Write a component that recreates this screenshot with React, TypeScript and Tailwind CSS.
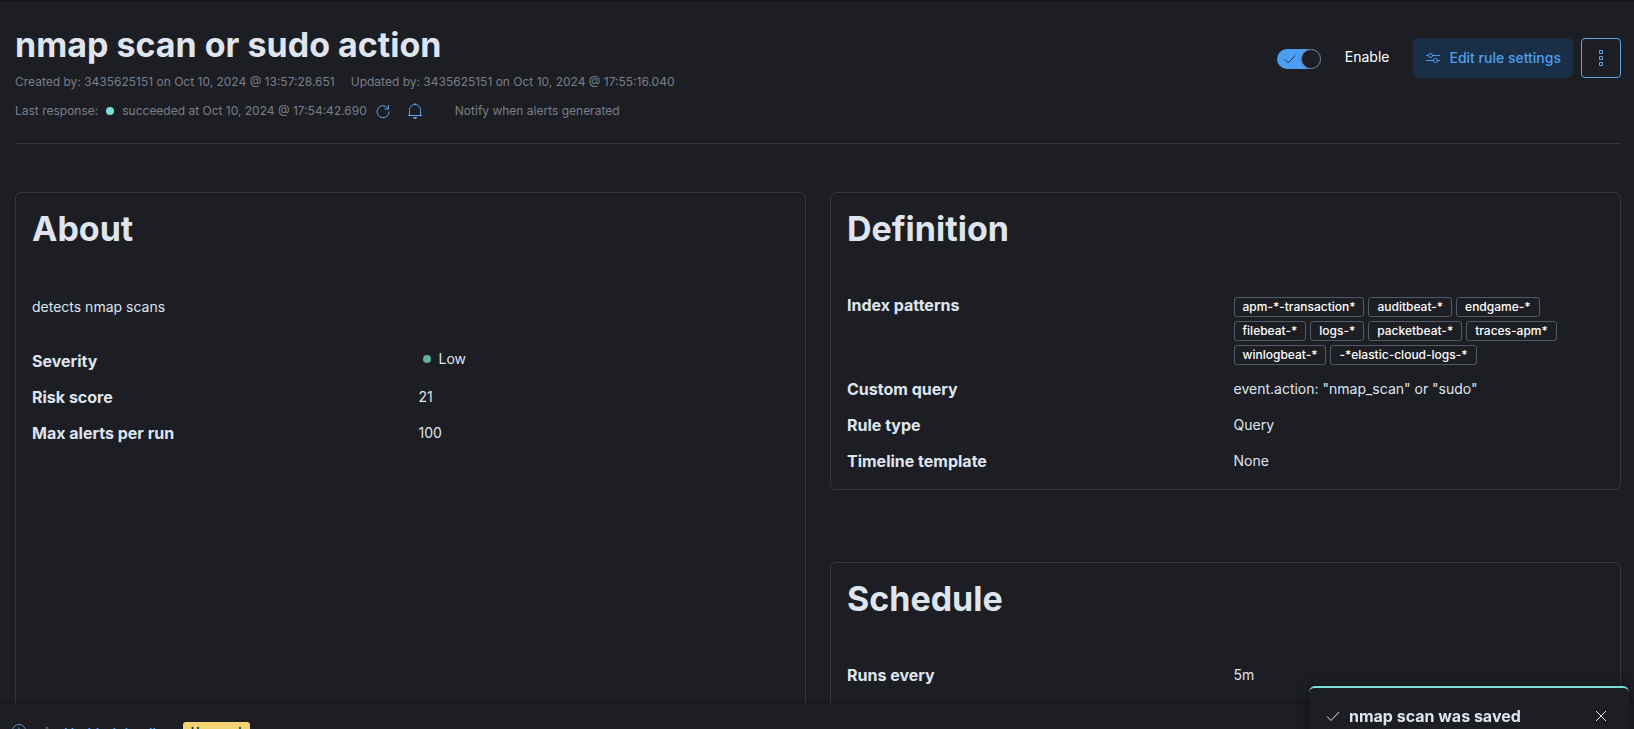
import type { ReactNode } from "react";

const tags = [
  "apm-*-transaction*",
  "auditbeat-*",
  "endgame-*",
  "filebeat-*",
  "logs-*",
  "packetbeat-*",
  "traces-apm*",
  "winlogbeat-*",
  "-*elastic-cloud-logs-*",
];

function Panel({ title, className, children }: { title: string; className?: string; children: ReactNode }) {
  return (
    <section className={`rounded-md border border-[#343741] p-4 ${className ?? ""}`}>
      <h2 className="text-[34px] leading-10 font-bold text-[#dfe5ef]">{title}</h2>
      <div className="pt-11">{children}</div>
    </section>
  );
}

function Row({ label, children }: { label: string; children: ReactNode }) {
  return (
    <div className="grid grid-cols-2 items-start gap-4">
      <dt className="text-base leading-6 font-bold text-[#dfe5ef]">{label}</dt>
      <dd className="text-sm leading-6">{children}</dd>
    </div>
  );
}

function CheckIcon({ className }: { className: string }) {
  return (
    <svg viewBox="0 0 16 16" className={className} fill="none" stroke="currentColor" aria-hidden="true">
      <path d="M2 8.5 6 12.5 14 4" />
    </svg>
  );
}

export default function App() {
  return (
    <div className="relative flex h-screen flex-col overflow-hidden border-t border-[#131418] bg-[#1d1e24] font-['Inter',sans-serif] text-[#dfe5ef]">
      <main className="min-h-0 flex-1 overflow-hidden pt-6 pr-[13px] pl-[15px]">
        <header className="flex items-start justify-between border-b border-[#343741] pb-[22px]">
          <div className="text-xs leading-5 text-[#7a7e89]">
            <h1 className="text-[34px] leading-10 font-bold text-[#dfe5ef]">nmap scan or sudo action</h1>
            <div className="mt-[7px] flex gap-4">
              <span>Created by: 3435625151 on Oct 10, 2024 @ 13:57:28.651</span>
              <span>Updated by: 3435625151 on Oct 10, 2024 @ 17:55:16.040</span>
            </div>
            <div className="mt-[9px] flex items-center">
              <span>Last response:</span>
              <span className="mx-2 size-2 rounded-full bg-[#7dded8]" />
              <span>succeeded at Oct 10, 2024 @ 17:54:42.690</span>
              <button aria-label="Refresh" className="ml-2 text-[#61a2e8]">
                <svg viewBox="0 0 16 16" className="size-4" fill="none" stroke="currentColor" aria-hidden="true">
                  <path d="M13.5 2v4h-4M13.1 5.6A6 6 0 1 0 14 8.5" />
                </svg>
              </button>
              <button aria-label="Notifications" className="ml-4 text-[#61a2e8]">
                <svg viewBox="0 0 16 16" className="size-4" fill="none" stroke="currentColor" aria-hidden="true">
                  <path d="M.8 12.5h14.4M2.5 12.5V7.5C2.5 4 4.8 1.5 8 1.5s5.500 2.500 5.500 6v5M8 0v1.500" />
                  <path d="M6 14h4a2 2 0 0 1-4 0Z" fill="currentColor" stroke="none" />
                </svg>
              </button>
              <span className="ml-8">Notify when alerts generated</span>
            </div>
          </div>
          <div className="flex items-center pt-[13px]">
            <label className="flex items-start gap-6 text-sm">
              <input type="checkbox" role="switch" defaultChecked className="peer sr-only" />
              <span className="mt-0.5 flex h-5 w-11 items-center justify-between rounded-full bg-[#4c9ff0] pl-1.5">
                <CheckIcon className="size-3.5 text-[#1d1e24]" />
                <span className="size-5 rounded-full border border-[#69707d] bg-[#1d1e24]" />
              </span>
              <span className="leading-5 text-white">Enable</span>
            </label>
            <button className="ml-6 flex h-10 items-center gap-2 rounded-md bg-[#1a2f45] px-3 text-sm font-medium text-[#4c9ff0]">
              <svg viewBox="0 0 16 16" className="size-4" fill="none" stroke="currentColor" aria-hidden="true">
                <path d="M1 5.500h2.500M7.500 5.500H15M1 10.500h7.500M12.500 10.500H15" />
                <circle cx="5.500" cy="5.500" r="2" />
                <circle cx="10.500" cy="10.500" r="2" />
              </svg>
              Edit rule settings
            </button>
            <button aria-label="All actions" className="ml-2 flex size-10 items-center justify-center rounded border border-[#61a2e8] text-[#61a2e8]">
              <svg viewBox="0 0 16 16" className="size-4" fill="none" stroke="currentColor" aria-hidden="true">
                <path d="M6.500.5h3v3h-3zM6.500 6.500h3v3h-3zM6.500 12.500h3v3h-3z" />
              </svg>
            </button>
          </div>
        </header>

        <div className="mt-12 grid grid-cols-2 gap-6">
          <Panel title="About" className="min-h-[600px]">
            <p className="pt-1 text-sm leading-5">detects nmap scans</p>
            <dl className="mt-8 flex flex-col gap-3">
              <Row label="Severity">
                <span className="ml-1 flex items-center gap-2 leading-5">
                  <span className="size-2 rounded-full bg-[#60b398]" />
                  Low
                </span>
              </Row>
              <Row label="Risk score">21</Row>
              <Row label="Max alerts per run">100</Row>
            </dl>
          </Panel>

          <div className="flex flex-col gap-[72px]">
            <Panel title="Definition">
              <dl className="flex flex-col gap-3">
                <Row label="Index patterns">
                  <ul className="flex flex-wrap gap-1 pt-1">
                    {tags.map((tag) => (
                      <li key={tag} className="rounded-[3px] border border-[#535966] px-2 text-xs leading-[18px] font-medium text-white">
                        {tag}
                      </li>
                    ))}
                  </ul>
                </Row>
                <Row label="Custom query">event.action: "nmap_scan" or "sudo"</Row>
                <Row label="Rule type">Query</Row>
                <Row label="Timeline template">None</Row>
              </dl>
            </Panel>
            <Panel title="Schedule" className="min-h-[300px]">
              <dl>
                <Row label="Runs every">5m</Row>
              </dl>
            </Panel>
          </div>
        </div>
      </main>

      <footer className="flex h-[25px] shrink-0 items-start overflow-hidden pt-[18px] pl-3 shadow-[0_-1px_4px_rgba(0,0,0,0.35)]">
        <button aria-label="Add timeline" className="text-[#61a2e8]">
          <svg viewBox="0 0 16 16" className="mt-0.5 size-[14px]" fill="none" stroke="currentColor" aria-hidden="true">
            <circle cx="8" cy="8" r="7.500" />
            <path d="M8 4v8M4 8h8" />
          </svg>
        </button>
        <svg viewBox="0 0 16 16" className="mt-1 ml-3.5 size-[14px] text-[#69707d]" fill="none" stroke="currentColor" aria-hidden="true">
          <path d="m8 1 2.200 4.600 4.800.7-3.500 3.500.8 5L8 12.400l-4.300 2.400.8-5L1 6.300l4.800-.7Z" />
        </svg>
        <a href="#timeline" className="ml-2.5 text-sm leading-6 font-medium text-[#4c9ff0]">Untitled timeline</a>
        <span className="ml-2.5 rounded-[3px] bg-[#f3d371] px-2 text-xs leading-5 font-semibold text-[#1d1e24]">Unsaved</span>
      </footer>

      <div role="status" className="fixed right-[5px] -bottom-4 flex h-[59px] w-80 items-start rounded-md border-t-2 border-[#7dded8] bg-[#1d1e24] px-4 pt-4 shadow-[0_0_12px_rgba(0,0,0,0.5)]">
        <CheckIcon className="mt-1 size-4" />
        <span className="ml-2 flex-1 text-base leading-6 font-bold">nmap scan was saved</span>
        <button aria-label="Dismiss" className="mt-1 mr-1">
          <svg viewBox="0 0 16 16" className="size-4" fill="none" stroke="currentColor" aria-hidden="true">
            <path d="m3 3 10 10M13 3 3 13" />
          </svg>
        </button>
      </div>
    </div>
  );
}
